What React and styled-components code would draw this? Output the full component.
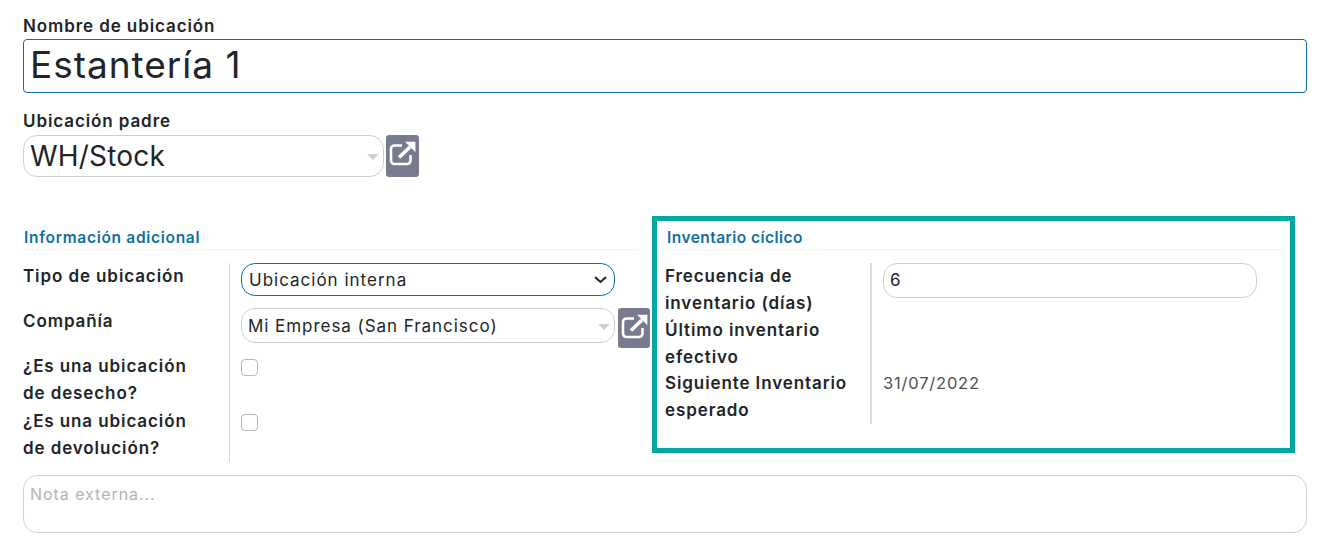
import React from "react";
import styled, { createGlobalStyle } from "styled-components";

const Global = createGlobalStyle`
  html, body { margin: 0; padding: 0; background: #fff; }
  body { font-family: Inter, "Open Sans", sans-serif; color: #212529; overflow: hidden; }
`;

const Page = styled.div`
  width: 1324px;
  height: 557px;
  box-sizing: border-box;
  padding: 12px 17px 0 23px;
`;

const Label = styled.label`
  display: block;
  font-size: 17px;
  line-height: 27px;
  font-weight: 600;
  letter-spacing: 0.9px;
  color: #212529;
`;

const TopLabel = styled(Label)`
  height: 27px;
  line-height: 29px;
`;

const TitleInput = styled.input`
  display: block;
  width: 100%;
  height: 54px;
  box-sizing: border-box;
  border: 1px solid #0f6ea3;
  border-radius: 4px;
  padding: 0 6px 3px;
  font: 400 37px Inter, sans-serif;
  letter-spacing: 0.98px;
  color: #212529;
  outline: none;
  background: #fff;
`;

const ParentBlock = styled.div`
  margin-top: 14px;
`;

const ParentRow = styled.div`
  display: flex;
  gap: 2px;
  height: 42px;
  margin-top: 1px;
`;

const FakeSelect = styled.div`
  position: relative;
  box-sizing: border-box;
  width: ${(p) => p.$width};
  height: ${(p) => p.$height};
  border: 1px solid #ced0d3;
  border-radius: 14px;
  display: flex;
  align-items: center;
  padding-left: ${(p) => p.$pad};
  font-size: ${(p) => p.$size};
  letter-spacing: ${(p) => p.$spacing};
  color: #212529;
  &::after {
    content: "";
    position: absolute;
    right: 4px;
    top: 50%;
    margin-top: -2px;
    border-left: 6px solid transparent;
    border-right: 6px solid transparent;
    border-top: 6px solid #cfcfcf;
  }
`;

const LinkButton = styled.button`
  box-sizing: border-box;
  width: ${(p) => p.$width};
  height: ${(p) => p.$height};
  border: 0;
  border-radius: 3px;
  background: #787b90;
  padding: 0;
  display: flex;
  justify-content: center;
  padding-top: 6px;
  flex: none;
`;

const Groups = styled.div`
  display: grid;
  grid-template-columns: 617px 643px;
  column-gap: 12px;
  margin-top: 39px;
  align-items: start;
`;

const Group = styled.section`
  box-sizing: border-box;
  padding-top: 9px;
`;

const HighlightGroup = styled(Group)`
  border: 5px solid #00a8a1;
  height: 237px;
  padding: 4px 6px 0 8px;
`;

const GroupTitle = styled.h3`
  margin: 0;
  padding-left: ${(p) => p.$inset};
  height: 24px;
  line-height: 26px;
  font-size: 15.5px;
  font-weight: 600;
  letter-spacing: ${(p) => p.$spacing};
  color: #0f6ea3;
  border-bottom: 1px solid #f1f1f1;
`;

const FieldGrid = styled.div`
  display: grid;
  grid-template-columns: ${(p) => p.$labelWidth} 1fr;
  margin-top: 13px;
`;

const FieldLabel = styled(Label)`
  height: ${(p) => p.$height};
  white-space: pre-line;
`;

const FieldValue = styled.div`
  height: ${(p) => p.$height};
  box-sizing: border-box;
  border-left: ${(p) => p.$rule || "1px solid #d8d8d8"};
  padding-left: 11px;
  display: flex;
  align-items: flex-start;
  gap: 3px;
`;

const NativeSelect = styled.select`
  appearance: none;
  width: 374px;
  height: 33px;
  box-sizing: border-box;
  border: 1px solid #0f6ea3;
  border-radius: 14px;
  padding: 0 7px;
  font: 400 17px Inter, sans-serif;
  letter-spacing: 1px;
  color: #212529;
  outline: none;
  background: #fff url("data:image/svg+xml,%3Csvg xmlns='http://www.w3.org/2000/svg' width='13' height='7' viewBox='0 0 13 7'%3E%3Cpath d='M1 1l5.500 5 5.500-5' fill='none' stroke='%23212529' stroke-width='2'/%3E%3C/svg%3E") no-repeat right 7px center;
`;

const NumberInput = styled.input`
  width: 374px;
  height: 35px;
  box-sizing: border-box;
  border: 1px solid #ced0d3;
  border-radius: 14px;
  padding: 0 6px 2px;
  font: 400 17px Inter, sans-serif;
  color: #212529;
  outline: none;
`;

const Check = styled.span`
  display: block;
  box-sizing: border-box;
  width: 17px;
  height: 17px;
  margin-top: 6px;
  border: 1px solid #b4b7bd;
  border-radius: 4px;
  background: #fff;
`;

const DateText = styled.span`
  line-height: 27px;
  color: #4c4f55;
  letter-spacing: 0.8px;
  font-size: 16.5px;
`;

const Note = styled.textarea`
  display: block;
  width: 100%;
  height: 58px;
  box-sizing: border-box;
  margin-top: 13px;
  border: 1px solid #ced0d3;
  border-radius: 14px;
  padding: 8px 6px;
  resize: none;
  outline: none;
  font: 400 16px Inter, sans-serif;
  letter-spacing: 0.95px;
  &::placeholder { color: #b3b3b3; }
`;

function LinkIcon() {
  return (
    <svg width="27" height="25" viewBox="0 0 27 25" fill="none">
      <path d="M13 4.500H5.500a3.500 3.500 0 0 0-3.500 3.500v11.500a3.500 3.500 0 0 0 3.500 3.500H18a3.500 3.500 0 0 0 3.500-3.500V14" stroke="#fff" strokeWidth="2.6" />
      <path d="M10 16.500 21 6" stroke="#fff" strokeWidth="3.6" />
      <path d="M16 .8h10.400v10.400z" fill="#fff" />
    </svg>
  );
}

export default function App() {
  return (
    <Page>
      <Global />
      <TopLabel>Nombre de ubicación</TopLabel>
      <TitleInput defaultValue="Estantería 1" />
      <ParentBlock>
        <TopLabel>Ubicación padre</TopLabel>
        <ParentRow>
          <FakeSelect $width="361px" $height="42px" $pad="6px" $size="28px" $spacing="0.2px">WH/Stock</FakeSelect>
          <LinkButton $width="33px" $height="42px"><LinkIcon /></LinkButton>
        </ParentRow>
      </ParentBlock>
      <Groups>
        <Group>
          <GroupTitle $inset="1px" $spacing="0.7px">Información adicional</GroupTitle>
          <FieldGrid $labelWidth="206px">
            <FieldLabel $height="45px">Tipo de ubicación</FieldLabel>
            <FieldValue $height="45px">
              <NativeSelect defaultValue="i"><option value="i">Ubicación interna</option></NativeSelect>
            </FieldValue>
            <FieldLabel $height="45px">Compañía</FieldLabel>
            <FieldValue $height="45px">
              <FakeSelect $width="374px" $height="35px" $pad="6px" $size="17px" $spacing="0.95px">Mi Empresa (San Francisco)</FakeSelect>
              <LinkButton $width="32px" $height="40px"><LinkIcon /></LinkButton>
            </FieldValue>
            <FieldLabel $height="54.5px">{"¿Es una ubicación\nde desecho?"}</FieldLabel>
            <FieldValue $height="54.5px"><Check /></FieldValue>
            <FieldLabel $height="54.5px">{"¿Es una ubicación\nde devolución?"}</FieldLabel>
            <FieldValue $height="54.5px"><Check /></FieldValue>
          </FieldGrid>
        </Group>
        <HighlightGroup>
          <GroupTitle $inset="2px" $spacing="0.45px">Inventario cíclico</GroupTitle>
          <FieldGrid $labelWidth="205px">
            <FieldLabel $height="53.5px">{"Frecuencia de\ninventario (días)"}</FieldLabel>
            <FieldValue $height="53.5px" $rule="2px solid #d8d8d8"><NumberInput defaultValue="6" /></FieldValue>
            <FieldLabel $height="53.5px">{"Último inventario\nefectivo"}</FieldLabel>
            <FieldValue $height="53.5px" $rule="2px solid #d8d8d8" />
            <FieldLabel $height="53.5px">{"Siguiente Inventario\nesperado"}</FieldLabel>
            <FieldValue $height="53.5px" $rule="2px solid #d8d8d8"><DateText>31/07/2022</DateText></FieldValue>
          </FieldGrid>
        </HighlightGroup>
      </Groups>
      <Note placeholder="Nota externa..." />
    </Page>
  );
}
